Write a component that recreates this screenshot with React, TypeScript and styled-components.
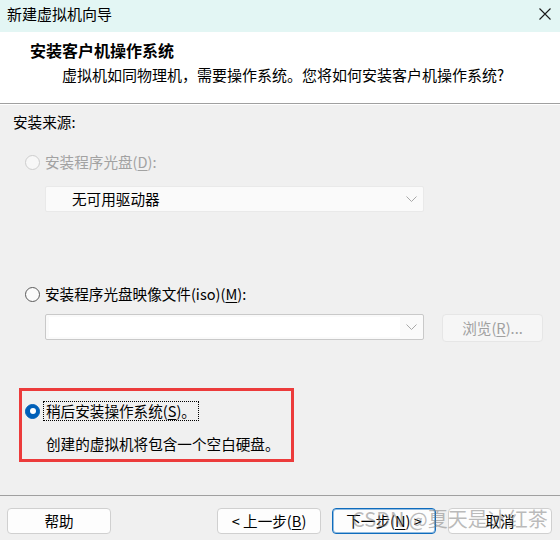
import React from "react";
import styled, { createGlobalStyle } from "styled-components";

const Global = createGlobalStyle`
  html, body { margin: 0; padding: 0; background: #f0f0f0; }
  body { font-family: "Noto Sans CJK SC", "Noto Sans", sans-serif; }
  u { text-decoration-thickness: 1px; text-underline-offset: 2px; }
`;

const Window = styled.div`
  width: 560px;
  height: 540px;
  display: flex;
  flex-direction: column;
  background: #f0f0f0;
  position: relative;
  overflow: hidden;
  color: #000;
`;

const TitleBar = styled.div`
  height: 32px;
  flex: none;
  background: #e3f6f4;
  display: flex;
  align-items: center;
  justify-content: space-between;
  padding: 0 9px 5px 7px;
  box-sizing: border-box;
  font-size: 15px;
  line-height: 20px;
`;

const Header = styled.div`
  height: 72px;
  flex: none;
  background: #fff;
  box-sizing: border-box;
  padding-top: 8px;
  border-bottom: 1px solid #a0a0a0;
  box-shadow: 0 1px 0 #fff;
`;

const HeaderTitle = styled.div`
  margin-left: 30px;
  font-size: 16px;
  font-weight: 700;
  line-height: 20px;
`;

const HeaderSub = styled.div`
  margin-left: 62px;
  margin-top: 5px;
  font-size: 15px;
  line-height: 20px;
`;

const Body = styled.div`
  flex: 1;
  display: flex;
  flex-direction: column;
  align-items: flex-start;
  padding: 8px 0 0 13px;
  font-size: 14.6px;
  line-height: 20px;
`;

const Label = styled.div``;

const RadioRow = styled.div<{ $top: number; $disabled?: boolean }>`
  margin-top: ${(p) => p.$top}px;
  margin-left: ${(p) => (p.$top === 0 ? 0 : 12)}px;
  display: flex;
  align-items: center;
  gap: 5px;
  height: 20px;
  color: ${(p) => (p.$disabled ? "#a2a2a2" : "#000")};
`;

const Radio = styled.span<{ $state: "disabled" | "off" | "on" }>`
  width: 15px;
  height: 15px;
  border-radius: 50%;
  box-sizing: border-box;
  flex: none;
  display: flex;
  align-items: center;
  justify-content: center;
  border: 1px solid
    ${(p) => (p.$state === "disabled" ? "#cdcdcd" : p.$state === "off" ? "#5a5a5a" : "#005fb8")};
  background: ${(p) => (p.$state === "disabled" ? "#f7f7f7" : p.$state === "off" ? "#fbfbfb" : "#005fb8")};
  &::after {
    content: "";
    display: ${(p) => (p.$state === "on" ? "block" : "none")};
    width: 6px;
    height: 6px;
    border-radius: 50%;
    background: #fff;
  }
`;

const Select = styled.div`
  margin: 14px 0 0 32px;
  width: 379px;
  height: 26px;
  box-sizing: border-box;
  background: #fafafa;
  border: 1px solid #e9e9e9;
  border-radius: 2px;
  display: flex;
  align-items: center;
  justify-content: space-between;
  padding: 0 6px 0 26px;
`;

const InputRow = styled.div`
  margin: 10px 0 0 32px;
  display: flex;
  align-items: flex-start;
  gap: 18px;
`;

const Combo = styled.div`
  width: 379px;
  height: 26px;
  box-sizing: border-box;
  background: #fafafa;
  border: 1px solid #c9c9c9;
  border-radius: 2px;
  display: flex;
  align-items: center;
  padding: 2px 6px 2px 3px;
  gap: 6px;
`;

const ComboField = styled.div`
  flex: 1;
  height: 100%;
  background: #fff;
`;

const Button = styled.button<{ $primary?: boolean; $disabled?: boolean; $w?: number }>`
  width: ${(p) => p.$w ?? 104}px;
  height: 26px;
  box-sizing: border-box;
  font-family: inherit;
  font-size: 14.6px;
  line-height: 20px;
  padding: 0;
  border-radius: 4px;
  background: ${(p) => (p.$disabled ? "#f6f6f6" : "#fdfdfd")};
  color: ${(p) => (p.$disabled ? "#a0a0a0" : "#000")};
  border: 1px solid ${(p) => (p.$primary ? "#0f6cbd" : p.$disabled ? "#e6e6e6" : "#d0d0d0")};
  box-shadow: ${(p) => (p.$primary ? "inset 0 0 0 1px rgba(15,108,189,0.45)" : "none")};
  display: flex;
  align-items: center;
  justify-content: center;
`;

const BrowseButton = styled(Button)`
  height: 28px;
`;

const Highlight = styled.div`
  margin: 46px 0 0 6px;
  width: 275px;
  height: 74px;
  box-sizing: border-box;
  border: 3px solid #ec3b3b;
  padding: 10px 0 0 3px;
  display: flex;
  flex-direction: column;
`;

const FocusText = styled.span`
  border: 1px dotted #000;
  padding: 0 2px;
  line-height: 18px;
  margin-left: -2px;
`;

const Note = styled.div`
  margin: 13px 0 0 21px;
`;

const Footer = styled.div`
  height: 45px;
  flex: none;
  box-sizing: border-box;
  border-top: 1px solid #a0a0a0;
  padding: 12px 0 0 7px;
  display: flex;
  align-items: flex-start;
`;

const NavGroup = styled.div`
  margin-left: 106px;
  display: flex;
  gap: 11px;
`;

const CancelButton = styled(Button)`
  margin-left: 1px;
`;

const Watermark = styled.div`
  position: absolute;
  left: 352px;
  top: 505px;
  font-size: 20px;
  line-height: 28px;
  color: rgba(120, 120, 120, 0.5);
  pointer-events: none;
  white-space: nowrap;
`;

const Chevron = () => (
  <svg width="11" height="7" viewBox="0 0 11 7">
    <polyline points="0.5,0.5 5.5,5.5 10.5,0.5" fill="none" stroke="#a8a8a8" strokeWidth="1" />
  </svg>
);

const CloseIcon = () => (
  <svg width="12" height="12" viewBox="0 0 12 12">
    <path d="M0.5 0.5 L11.5 11.5 M11.5 0.5 L0.5 11.5" stroke="#1a1a1a" strokeWidth="1.1" />
  </svg>
);

export default function App() {
  return (
    <>
      <Global />
      <Window>
        <TitleBar>
          <span>新建虚拟机向导</span>
          <CloseIcon />
        </TitleBar>
        <Header>
          <HeaderTitle>安装客户机操作系统</HeaderTitle>
          <HeaderSub>虚拟机如同物理机，需要操作系统。您将如何安装客户机操作系统?</HeaderSub>
        </Header>
        <Body>
          <Label>安装来源:</Label>
          <RadioRow $top={20} $disabled>
            <Radio $state="disabled" />
            <span>
              安装程序光盘(<u>D</u>):
            </span>
          </RadioRow>
          <Select>
            <span>无可用驱动器</span>
            <Chevron />
          </Select>
          <RadioRow $top={72}>
            <Radio $state="off" />
            <span>
              安装程序光盘映像文件(iso)(<u>M</u>):
            </span>
          </RadioRow>
          <InputRow>
            <Combo>
              <ComboField />
              <Chevron />
            </Combo>
            <BrowseButton $disabled $w={101}>
              浏览(<u>R</u>)...
            </BrowseButton>
          </InputRow>
          <Highlight>
            <RadioRow $top={0}>
              <Radio $state="on" />
              <FocusText>
                稍后安装操作系统(<u>S</u>)。
              </FocusText>
            </RadioRow>
            <Note>创建的虚拟机将包含一个空白硬盘。</Note>
          </Highlight>
        </Body>
        <Footer>
          <Button>帮助</Button>
          <NavGroup>
            <Button>
              &lt; 上一步(<u>B</u>)
            </Button>
            <Button $primary>
              下一步(<u>N</u>) &gt;
            </Button>
            <CancelButton>取消</CancelButton>
          </NavGroup>
        </Footer>
        <Watermark>CSDN @夏天是冰红茶</Watermark>
      </Window>
    </>
  );
}
